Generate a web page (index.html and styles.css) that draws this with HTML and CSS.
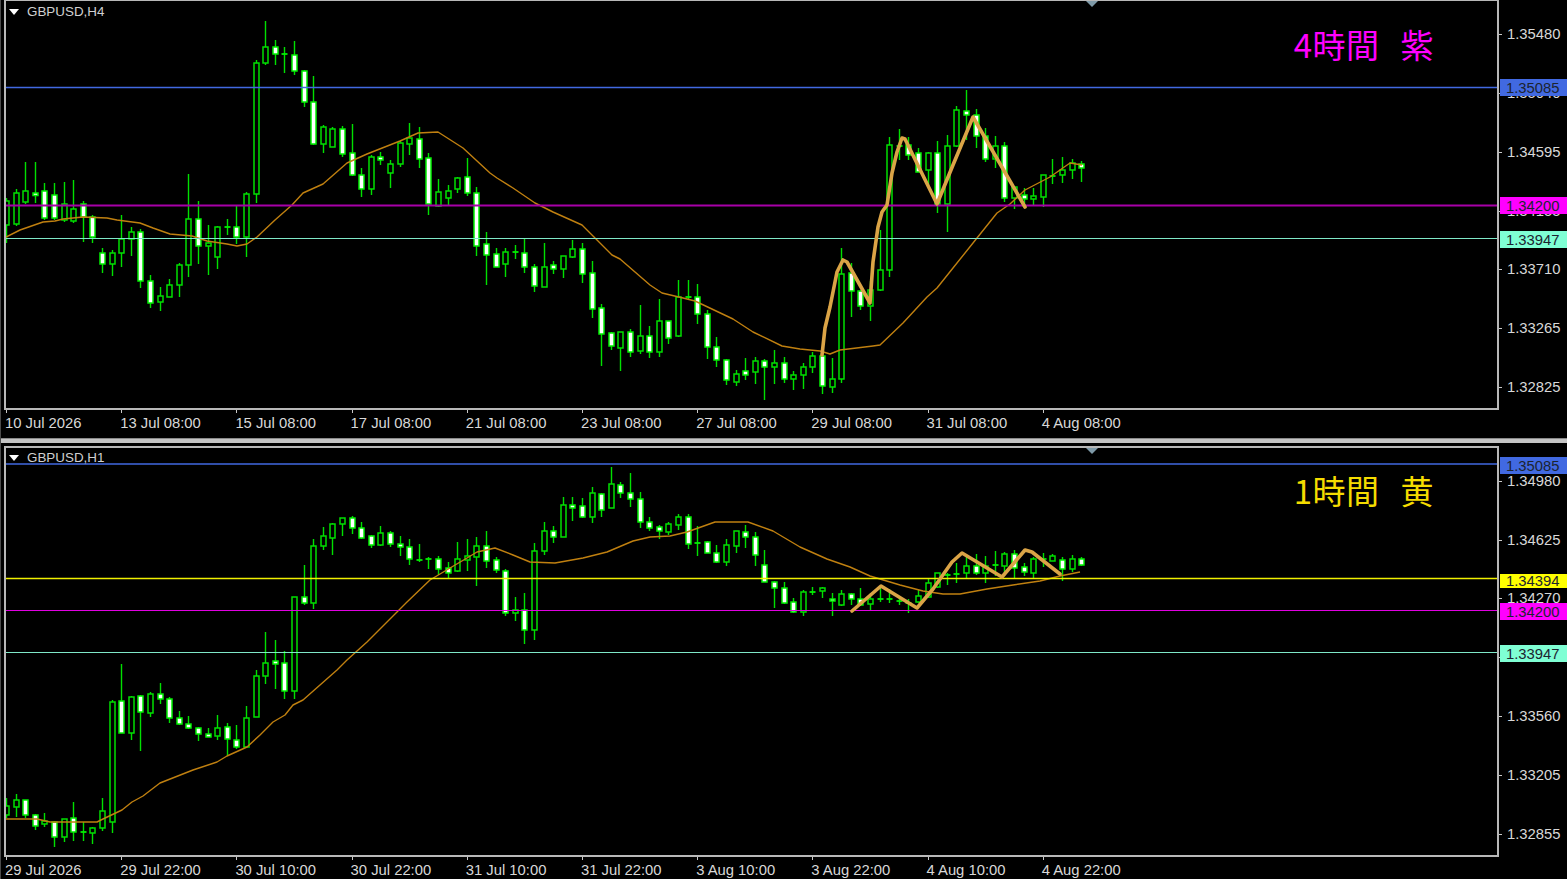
FILE: index.html
```html
<!DOCTYPE html>
<html lang="ja">
<head>
<meta charset="utf-8">
<title>GBPUSD H4 / H1</title>
<link rel="stylesheet" href="styles.css">
</head>
<body>
<main class="terminal">
  <section class="pane pane-h4">
    <div class="plot">
      <svg class="series" id="chart-h4" viewBox="6 1 1491 407" aria-hidden="true"></svg>
      <div class="title"><span class="title-arrow"></span>GBPUSD,H4</div>
      <div class="shift-mark"></div>
      <div class="note note-purple">4時間 紫</div>
    </div>
    <div class="price-scale">
      <span class="tick p-34">1.35480</span>
      <span class="tick p-93">1.35040</span>
      <span class="tick p-152">1.34595</span>
      <span class="tick p-211">1.34155</span>
      <span class="tick p-270">1.33710</span>
      <span class="tick p-328">1.33265</span>
      <span class="tick p-387">1.32825</span>
      <span class="flag flag-blue b-88">1.35085</span>
      <span class="flag flag-magenta b-205">1.34200</span>
      <span class="flag flag-aqua b-239">1.33947</span>
    </div>
    <div class="time-scale">
      <span>10 Jul 2026</span><span>13 Jul 08:00</span><span>15 Jul 08:00</span><span>17 Jul 08:00</span><span>21 Jul 08:00</span><span>23 Jul 08:00</span><span>27 Jul 08:00</span><span>29 Jul 08:00</span><span>31 Jul 08:00</span><span>4 Aug 08:00</span>
    </div>
  </section>
  <div class="divider"></div>
  <section class="pane pane-h1">
    <div class="plot">
      <svg class="series" id="chart-h1" viewBox="6 448 1491 407" aria-hidden="true"></svg>
      <div class="title"><span class="title-arrow"></span>GBPUSD,H1</div>
      <div class="shift-mark"></div>
      <div class="note note-yellow">1時間 黄</div>
    </div>
    <div class="price-scale">
      <span class="tick q-481">1.34980</span>
      <span class="tick q-540">1.34625</span>
      <span class="tick q-598">1.34270</span>
      <span class="tick q-657">1.33915</span>
      <span class="tick q-716">1.33560</span>
      <span class="tick q-775">1.33205</span>
      <span class="tick q-834">1.32855</span>
      <span class="flag flag-blue c-465">1.35085</span>
      <span class="flag flag-yellow c-580">1.34394</span>
      <span class="flag flag-magenta c-611">1.34200</span>
      <span class="flag flag-aqua c-654">1.33947</span>
    </div>
    <div class="time-scale">
      <span>29 Jul 2026</span><span>29 Jul 22:00</span><span>30 Jul 10:00</span><span>30 Jul 22:00</span><span>31 Jul 10:00</span><span>31 Jul 22:00</span><span>3 Aug 10:00</span><span>3 Aug 22:00</span><span>4 Aug 10:00</span><span>4 Aug 22:00</span>
    </div>
  </section>
</main>
<script src="chart.js"></script>
</body>
</html>
```
FILE: styles.css
```css
* { box-sizing: border-box; }
html, body { margin: 0; height: 100%; background: #000; overflow: hidden; }
body { font-family: "Liberation Sans", Arial, sans-serif; color: #d4d4d4; }

.terminal { width: 1567px; height: 879px; display: flex; flex-direction: column; border-left: 1px solid #4a4a4a; }

.pane { display: grid; grid-template-columns: 1495px 1fr; grid-template-rows: auto 1fr; padding-left: 3px; }
.pane-h4 { height: 438px; }
.pane-h1 { height: 436px; padding-top: 3px; }
.pane-h4 .plot { height: 410px; }
.pane-h1 .plot { height: 411px; }

.divider { height: 5px; background: #c4c4c4; border-top: 1px solid #8a8a8a; }

.plot { position: relative; border: 2px solid #b8b8b8; background: #000; }
.pane-h4 .plot { border-top-width: 1px; }
.series { position: absolute; inset: 0; width: 100%; height: 100%; display: block; }

.title { position: absolute; left: 3px; top: 2px; display: flex; align-items: center; gap: 8px; font-size: 13.4px; line-height: 18px; color: #d0d0d0; }
.pane-h1 .title { top: 1px; }
.title-arrow { width: 0; height: 0; border-left: 5.5px solid transparent; border-right: 5.5px solid transparent; border-top: 6px solid #fff; }

.shift-mark { position: absolute; left: 1080px; top: 0; width: 0; height: 0; border-left: 6px solid transparent; border-right: 6px solid transparent; border-top: 6px solid #7f9aa8; }

.note { position: absolute; right: 63px; font-family: "Noto Sans CJK JP", "Noto Sans", sans-serif; font-size: 33px; font-weight: 400; letter-spacing: 0.5px; line-height: 40px; white-space: pre; word-spacing: 13px; }
.pane-h4 .note { top: 23px; }
.pane-h1 .note { top: 22px; }
.note-purple { color: #ff00ff; }
.note-yellow { color: #f5dc00; }

.price-scale { position: relative; grid-column: 2; grid-row: 1; overflow: visible; font-size: 14.8px; }
.tick, .flag { position: absolute; line-height: 16px; white-space: nowrap; }
.tick { left: 8px; color: #d8d8d8; }
.tick::before { content: ""; position: absolute; left: -8px; top: 8px; width: 3px; height: 1px; background: #c8c8c8; }
.flag { left: 1px; width: 67px; height: 17px; padding-left: 6px; line-height: 18px; color: #1c2430; overflow: hidden; }
.flag-blue { background: #4169e1; }
.flag-magenta { background: #ff00ff; }
.flag-aqua { background: #7fffd4; }
.flag-yellow { background: #ffff00; height: 14px; line-height: 15px; }

.p-34 { top: 26px; } .p-93 { top: 85px; } .p-152 { top: 144px; } .p-211 { top: 203px; }
.p-270 { top: 261px; } .p-328 { top: 320px; } .p-387 { top: 379px; }
.b-88 { top: 79px; } .b-205 { top: 197px; } .b-239 { top: 231px; }

.q-481 { top: 27px; } .q-540 { top: 86px; } .q-598 { top: 144px; } .q-657 { top: 203px; }
.q-716 { top: 262px; } .q-775 { top: 321px; } .q-834 { top: 380px; }
.c-465 { top: 11px; } .c-580 { top: 128px; } .c-611 { top: 157px; } .c-654 { top: 199px; }

.time-scale { grid-column: 1 / -1; display: flex; font-size: 14.8px; line-height: 16px; padding-top: 5px; color: #d8d8d8; }
.time-scale span { position: relative; flex: 0 0 115.2px; white-space: nowrap; padding-left: 1px; }
.time-scale span::before { content: ""; position: absolute; left: 2px; top: -5px; width: 1px; height: 3px; background: #c8c8c8; }

.candle-wick { stroke: #00e000; stroke-width: 1.4; fill: none; }
.candle-up { stroke: #00e000; stroke-width: 1.5; fill: #000; }
.candle-down { stroke: #00f000; stroke-width: 1.5; fill: #fff; }
.candle-doji { stroke: #00f000; stroke-width: 1.8; fill: none; }
.ma { stroke: #c08010; stroke-width: 1.4; fill: none; stroke-linejoin: round; }
.wave { stroke: #dba446; stroke-width: 3.6; fill: none; stroke-linejoin: round; stroke-linecap: round; filter: blur(0.4px); }
.level { stroke-width: 1; }
.level-blue { stroke: #4169e1; stroke-width: 1.4; }
.level-magenta { stroke: #a800a8; stroke-width: 1.8; }
.level-magenta-bright { stroke: #e000e0; stroke-width: 1.2; }
.level-aqua { stroke: #7fe8c8; stroke-width: 1.2; }
.level-yellow { stroke: #f0f000; stroke-width: 1.3; }
```
FILE: chart.js
```js
// Each candle: [high, bodyTop, bodyBottom, low, kind]; kind 0 = rising (hollow), 1 = falling (white). Values are page pixels.
var H4 = [
[198,201,225,243,0],[189,193,224,226,0],[162,191,202,204,0],[162,193,195.5,203,1],[183,191,218,220,1],[183,195,218,220,1],[182,204,220,222,0],[180,209,221,223,0],
[201,204,217,242,1],[215,217,237,243,1],[248,253,264,273,1],[250,253,264,276,0],[215,239,253,267,0],[227,232,239,256,0],[229,232,281,288,1],[275,281,303,308,1],
[287,296,302,311,0],[279,285,297,297,0],[263,265,285,297,0],[174,219,265,277,0],[201,219,246,264,1],[225,243,246,275,0],[226,227,257,269,0],[219,227,227,235,1],
[205,227,237,244,1],[192,194,237,257,0],[60,63,194,203,0],[21,47,63,65,0],[40,47,54,65,1],[47,54,54,73,1],[41,55,71,75,1],[70,71,102,107,1],
[76,102,144,145,1],[125,127,144,153,0],[127,129,147,147,0],[126,129,154,157,1],[124,153,175,176,1],[168,175,189,197,1],[155,157,189,195,0],[152,157,160,165,1],
[160,164,173,188,0],[141,143,164,167,0],[123,138,144,155,0],[127,139,159,168,1],[153,158,204,215,1],[179,192,206,207,0],[185,191,198,205,0],[177,178,189,193,0],
[158,177,193,196,1],[187,193,246,256,1],[232,244,255,285,1],[248,254,267,267,1],[248,252,264,277,0],[245,252,252,259,1],[239,253,267,273,1],[264,267,286,292,1],
[243,267,287,287,0],[261,265,269,274,1],[256,256,269,278,0],[240,249,257,258,0],[243,249,274,283,1],[261,273,309,318,1],[304,308,334,366,1],[332,333,346,350,1],
[332,332,348,371,0],[329,332,352,357,1],[305,336,351,354,0],[326,336,352,358,1],[299,321,352,357,0],[321,321,338,344,1],[280,297,336,337,0],[280,297,297,300,1],
[284,297,314,324,1],[310,314,347,359,1],[337,347,360,367,1],[359,360,380,385,1],[370,374,382,386,0],[358,371,375,380,1],[357,361,372,384,0],[359,361,367,400,1],
[350,363,367,384,0],[357,363,379,383,1],[371,375,379,390,0],[363,367,375,389,0],[352,356,367,373,0],[350,356,386,394,1],[358,379,387,393,0],[248,274,379,383,0],
[263,273,291,317,1],[290,291,306,310,1],[281,290,306,321,0],[230,270,290,291,0],[137,145,270,277,0],[129,146,146,160,1],[137,145,155,160,1],[148,153,172,172,1],
[152,153,170,185,0],[141,153,204,213,1],[135,146,204,232,0],[106,110,146,147,0],[90,111,115,140,1],[109,115,136,148,1],[128,136,159,162,1],[136,146,159,168,0],
[142,146,198,202,1],[187,187,198,209,0],[188,195,199,208,1],[188,196,199,205,0],[175,175,197,207,0],[159,176,176,184,1],[157,170,175,183,0],[159,163,170,179,0],[161,164,168,182,1]
];
var H1 = [
[798,806,815,818,0],[794,800,807,817,0],[800,800,815,818,1],[814,815,826,830,1],[813,821,824,827,0],[821,822,837,847,1],[819,819,837,842,0],[802,818,832,841,1],
[822,832,832,841,1],[827,828,833,844,0],[798,811,828,831,0],[700,702,822,833,0],[664,701,733,733,1],[696,697,733,740,0],[695,696,712,751,1],[692,694,713,717,0],
[683,694,699,704,1],[697,699,718,723,1],[711,718,724,725,1],[716,724,728,729,1],[727,728,734,741,1],[728,734,737,737,1],[715,728,736,740,0],[723,727,739,756,1],
[725,740,747,749,1],[706,718,747,748,0],[670,676,717,717,0],[632,663,676,684,0],[640,661,664,689,1],[651,663,691,699,1],[597,597,691,699,0],[565,597,603,605,1],
[539,546,603,609,0],[527,536,546,550,0],[523,524,538,555,0],[518,518,524,536,0],[516,518,528,534,1],[522,528,538,539,1],[535,536,545,548,1],[526,533,545,546,0],
[531,533,544,547,1],[536,544,547,556,1],[539,547,559,565,1],[544,560,560,562,1],[557,559,559,569,1],[556,559,569,575,1],[562,568,573,578,1],[542,559,571,572,0],
[539,556,560,571,0],[537,546,557,586,0],[531,546,561,568,1],[557,560,570,573,1],[569,571,613,616,1],[597,610,613,621,0],[593,610,630,644,1],[543,551,630,640,0],
[522,531,551,555,0],[526,531,537,543,1],[497,505,537,537,0],[497,505,508,521,1],[498,506,517,518,1],[487,493,517,523,0],[493,494,510,517,1],[467,484,508,508,0],
[482,485,493,498,1],[473,493,499,507,1],[492,499,522,528,1],[517,522,528,531,1],[525,527,531,539,1],[522,524,532,535,0],[514,517,525,530,0],[514,517,544,549,1],
[526,543,543,556,1],[541,542,553,553,1],[545,553,562,563,1],[539,545,562,566,0],[531,531,546,553,0],[525,532,537,548,1],[532,537,555,566,1],[550,565,582,582,1],
[581,582,588,608,1],[582,588,603,604,1],[598,602,612,613,1],[590,592,612,616,0],[587,592,592,595,1],[587,588,591,598,0],[593,599,601,616,1],[590,594,605,606,0],
[593,594,599,605,1],[588,599,605,606,1],[593,599,604,610,0],[588,599,599,602,1],[589,599,599,603,1],[597,601,601,605,1],[599,603,603,613,1],[590,596,602,603,0],
[579,583,597,598,0],[573,573,587,588,0],[573,575,575,585,1],[563,574,574,583,1],[555,566,573,578,0],[554,566,573,575,1],[556,566,573,583,0],[551,565,565,576,1],
[552,554,566,576,0],[550,554,568,578,1],[563,567,572,576,1],[557,559,573,578,0],[553,559,559,567,1],[554,556,561,561,0],[557,560,569,581,1],[555,559,569,572,0],[557,559,565,566,1]
];

var MA_H4 = "6,237 20,230 43,222 55,221 63,219 83,217 107,218 117,220 140,223 153,228 170,234 192,236 207,241 227,244 237,246 247,244 257,237 275,220 292,205 303,193 323,184 347,163 367,154 400,141 418,133 438,132 463,148 490,173 497,178 513,188 535,203 553,212 582,225 597,240 612,255 620,259 650,285 662,293 683,298 695,301 733,319 753,332 782,346 800,349 820,351 830,354 840,350 873,346 880,345 903,323 927,297 937,288 953,268 977,238 997,213 1010,204 1025,190 1050,177 1070,163 1082,165";
var WAVE_H4 = "822,355 825,328 830,307 837,272 843,260 847,262 870,303 873,262 878,227 882,212 887,205 892,173 897,152 902,138 905,139 937,204 953,165 973,117 1025,207";
var MA_H1 = "6,819 37,819 50,822 97,822 103,819 122,810 132,802 143,796 160,783 193,770 217,762 227,756 247,747 260,735 273,722 285,715 293,705 303,700 320,685 337,670 347,660 367,642 397,612 407,602 430,580 450,568 467,558 477,552 495,548 513,555 530,562 555,563 583,558 607,552 633,541 650,537 670,536 687,532 715,522 748,522 773,531 800,547 827,559 850,567 870,576 900,585 923,591 943,594 960,594 987,589 1013,585 1040,581 1060,576 1080,572";
var WAVE_H1 = "852,611 881,586 917,608 933,589 952,562 962,553 1002,577 1025,550 1032,552 1060,574";

var SVG_NS = "http://www.w3.org/2000/svg";

function add(svg, tag, cls, attrs) {
  var el = document.createElementNS(SVG_NS, tag);
  el.setAttribute("class", cls);
  for (var k in attrs) el.setAttribute(k, attrs[k]);
  svg.appendChild(el);
}

function drawCandle(svg, c, i) {
  var x = Math.round(6 + 9.6 * i) + 0.5;
  add(svg, "line", "candle-wick", { x1: x, x2: x, y1: c[0], y2: c[3] });
  var h = c[2] - c[1];
  if (h < 1.5) {
    add(svg, "line", "candle-doji", { x1: x - 3, x2: x + 3, y1: c[1], y2: c[1] });
  } else {
    add(svg, "rect", c[4] ? "candle-down" : "candle-up", { x: x - 2.5, y: c[1], width: 5, height: h });
  }
}

function drawChart(id, candles, ma, wave, levels) {
  var svg = document.getElementById(id);
  candles.forEach(function (c, i) { drawCandle(svg, c, i); });
  add(svg, "polyline", "ma", { points: ma });
  levels.forEach(function (l) {
    add(svg, "line", "level level-" + l[1], { x1: 0, x2: 1500, y1: l[0], y2: l[0] });
  });
  add(svg, "polyline", "wave", { points: wave });
}

drawChart("chart-h4", H4, MA_H4, WAVE_H4, [[87.5, "blue"], [205.5, "magenta"], [238.5, "aqua"]]);
drawChart("chart-h1", H1, MA_H1, WAVE_H1, [[464, "blue"], [578.5, "yellow"], [610.5, "magenta-bright"], [652.5, "aqua"]]);
```
